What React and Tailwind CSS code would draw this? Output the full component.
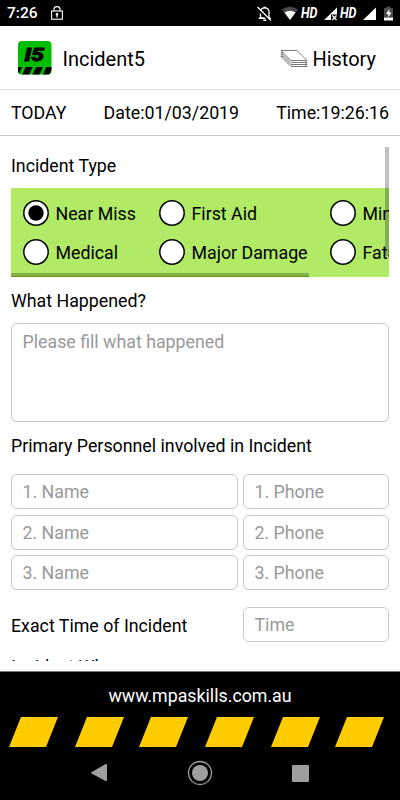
import React from "react";

const incidentTypes = [
  { name: "Near Miss", checked: true },
  { name: "First Aid" },
  { name: "Minor Damage" },
  { name: "Medical" },
  { name: "Major Damage" },
  { name: "Fatality" },
];

const personnel = [1, 2, 3];

const StatusBar = () => (
  <div className="h-[26px] shrink-0 bg-black text-white flex items-center">
    <span className="pl-[7px] pt-[2px] w-[51px] text-[15.5px] leading-none font-medium">7:26</span>
    <svg width="12" height="14" viewBox="0 0 12 14" fill="none" stroke="#fff">
      <rect x="0.6" y="5" width="10.8" height="8.2" strokeWidth="1.1" />
      <path d="M3 5V3a3 2.4 0 0 1 6 0v2" strokeWidth="1.1" />
      <path d="M6 7.5v4" strokeWidth="1.2" />
      <circle cx="6" cy="8.3" r="1.2" fill="#fff" stroke="none" />
    </svg>
    <svg className="ml-auto" width="144" height="26" viewBox="256 0 144 26">
      {/* muted bell */}
      <path d="M260.5 18h8.5v-6.5a4.3 4.3 0 0 0-8.5 0z" fill="none" stroke="#fff" strokeWidth="1.3" />
      <path d="M258.6 18.3h12.2" stroke="#fff" strokeWidth="1.4" />
      <path d="M263.5 7.5h2.5M263.3 20.3h3" stroke="#fff" strokeWidth="1.4" />
      <path d="M257 8.5L270 21.5" stroke="#000" strokeWidth="2" />
      <path d="M257.5 7L271 20.5" stroke="#fff" strokeWidth="1.3" />
      {/* wifi */}
      <path d="M282 9.5Q290 4 298 9.5L290 20z" fill="#4a4a4a" />
      <path d="M284.5 12.5Q290 8.8 295.5 12.5L290 20z" fill="#fff" />
      <text x="301" y="18" fontSize="14.5" className="font-bold italic" fill="#fff" textLength="16.5" lengthAdjust="spacingAndGlyphs">HD</text>
      <path d="M324 20L337 7.5V14.5H331V20z" fill="#fff" />
      <path d="M332.3 15.5l4.2 4.5M336.5 15.5l-4.2 4.5" stroke="#fff" strokeWidth="1.3" />
      <text x="340" y="18" fontSize="14.5" className="font-bold italic" fill="#fff" textLength="16.5" lengthAdjust="spacingAndGlyphs">HD</text>
      <path d="M363 20L376 7.5V20z" fill="#fff" />
      <path d="M386.5 6.5h4v1.5h2.5v9.5h-9V8h2.5z" fill="#4a4a4a" />
      <path d="M384 17.5h9v3h-9z" fill="#fff" />
      <path d="M389.3 9l-3.3 5h2.2v3.5l3.3-5h-2.2z" fill="#fff" />
    </svg>
  </div>
);

const Logo = () => (
  <svg width="34" height="34" viewBox="0 0 34 34">
    <clipPath id="logoClip">
      <rect width="33.5" height="33.5" rx="4" />
    </clipPath>
    <g clipPath="url(#logoClip)">
      <rect width="34" height="34" fill="#00bd00" />
      <path d="M0 26h4.2L0.5 34H0zM7.7 26h7L11 34H4zM18 26h7l-3.7 8h-7zM28.3 26H34v2l-2.7 6h-6.7z" fill="#000" />
      <text x="6.5" y="19.8" fontSize="18" className="font-black italic" textLength="19.5" lengthAdjust="spacingAndGlyphs" stroke="#000" strokeWidth="0.9">I5</text>
    </g>
  </svg>
);

const HistoryIcon = () => (
  <svg width="28" height="20" viewBox="0 0 28 20" fill="#fff" stroke="#6b6b6b" strokeWidth="0.9" strokeLinejoin="round">
    <path d="M1 7.5h16L27 17.5H11z" />
    <path d="M1 5.5h16L27 15.5H11z" />
    <path d="M1 3.5h16L27 13.5H11z" />
    <path d="M1 1.5h16L27 11.5H11z" />
  </svg>
);

const Header = () => (
  <header className="h-16 shrink-0 border-b border-[#dcdcdc] flex items-center justify-between pl-[18px] pr-6">
    <div className="flex items-center gap-[10.5px]">
      <Logo />
      <h1 className="pt-[2px] text-[20px] leading-none">Incident5</h1>
    </div>
    <button className="pt-[2px] flex items-center gap-1 text-[20px] leading-none">
      <HistoryIcon />
      History
    </button>
  </header>
);

const Radio = ({ name, checked }) => (
  <label className="flex items-center gap-[6.5px] whitespace-nowrap">
    <svg className="shrink-0" width="26" height="26" viewBox="0 0 26 26">
      <circle cx="13" cy="13" r="12.2" fill="#fff" stroke="#000" strokeWidth="1.5" />
      {checked && <circle cx="13" cy="13" r="7.7" />}
    </svg>
    <span className="pt-[2px]">{name}</span>
  </label>
);

const inputClass =
  "block h-[35px] rounded-md border border-[#c8c8c8] px-[10.5px] placeholder:text-[#999] outline-none";

const Footer = () => (
  <footer className="shrink-0 h-[129px] bg-black text-white border-t border-[#777] flex flex-col">
    <p className="pt-[13px] text-center">www.mpaskills.com.au</p>
    <svg className="mt-[10px]" width="400" height="30" viewBox="0 0 400 30" fill="#ffcc00">
      {[9, 75, 139, 205, 271, 335].map((x) => (
        <path key={x} d={`M${x} 30L${x + 12} 0H${x + 49}L${x + 37} 30z`} />
      ))}
    </svg>
    <div className="pt-[13px] flex items-center justify-between pl-[90px] pr-[91.5px]">
      <svg width="18" height="20" viewBox="0 0 18 20" fill="#9e9e9e">
        <path d="M1.5 9.3L15.5 1Q17 0.5 17 2v15q0 1.5-1.5 1L1.5 10.5q-1-.6 0-1.2z" />
      </svg>
      <svg width="26" height="26" viewBox="0 0 26 26">
        <circle cx="13" cy="13" r="11.5" fill="none" stroke="#9e9e9e" strokeWidth="1.3" />
        <circle cx="13" cy="13" r="8" fill="#9e9e9e" />
      </svg>
      <span className="w-[17px] h-[17px] rounded-[1px] bg-[#9e9e9e]" />
    </div>
  </footer>
);

const App = () => {
  return (
    <div className="w-[400px] h-[800px] overflow-hidden bg-white text-black flex flex-col font-['Roboto',sans-serif] text-[17.8px] leading-[22px]">
      <StatusBar />
      <Header />

      {/* DATE ROW */}
      <div className="h-[46px] shrink-0 border-b border-[#c8c8c8] flex items-center justify-between px-[11px]">
        <span>TODAY</span>
        <span>Date:01/03/2019</span>
        <span>Time:19:26:16</span>
      </div>

      {/* FORM */}
      <div className="relative h-[525px] mb-[10px] shrink-0 overflow-hidden px-[11px]">
        <h2 className="pt-[19px] pb-[11px]">Incident Type</h2>
        <div className="relative h-[89px] bg-[#b1ea64] overflow-hidden">
          <div className="w-[460px] pt-[12px] pl-[12px] grid grid-cols-[136px_171px_140px] gap-y-[13px]">
            {incidentTypes.map((t) => (
              <Radio key={t.name} name={t.name} checked={t.checked} />
            ))}
          </div>
          <span className="absolute left-0 bottom-0 w-[298px] h-1 bg-[#85b04b] border-b border-[#5f9a10]" />
        </div>

        <h2 className="pt-[13px] pb-[11px]">What Happened?</h2>
        <textarea
          placeholder="Please fill what happened"
          className="block w-full h-[99px] resize-none rounded-md border border-[#c8c8c8] px-[10.5px] py-[7px] placeholder:text-[#999] outline-none"
        />

        <h2 className="pt-[13px] pb-[17px]">Primary Personnel involved in Incident</h2>
        <div className="grid grid-cols-[227px_146px] gap-x-[5px] gap-y-[5.5px]">
          {personnel.map((n) => (
            <React.Fragment key={n}>
              <input placeholder={`${n}. Name`} className={inputClass} />
              <input placeholder={`${n}. Phone`} className={inputClass} />
            </React.Fragment>
          ))}
        </div>

        <div className="pt-[17px] flex items-center justify-between">
          <h2 className="pt-[2px]">Exact Time of Incident</h2>
          <input placeholder="Time" className={`${inputClass} w-[146px]`} />
        </div>
        <h2 className="pt-[14px]">Incident Where</h2>

        <span className="absolute right-[11px] top-[11px] w-1 h-[109px] bg-black/25" />
      </div>

      <Footer />
    </div>
  );
};

export default App;
